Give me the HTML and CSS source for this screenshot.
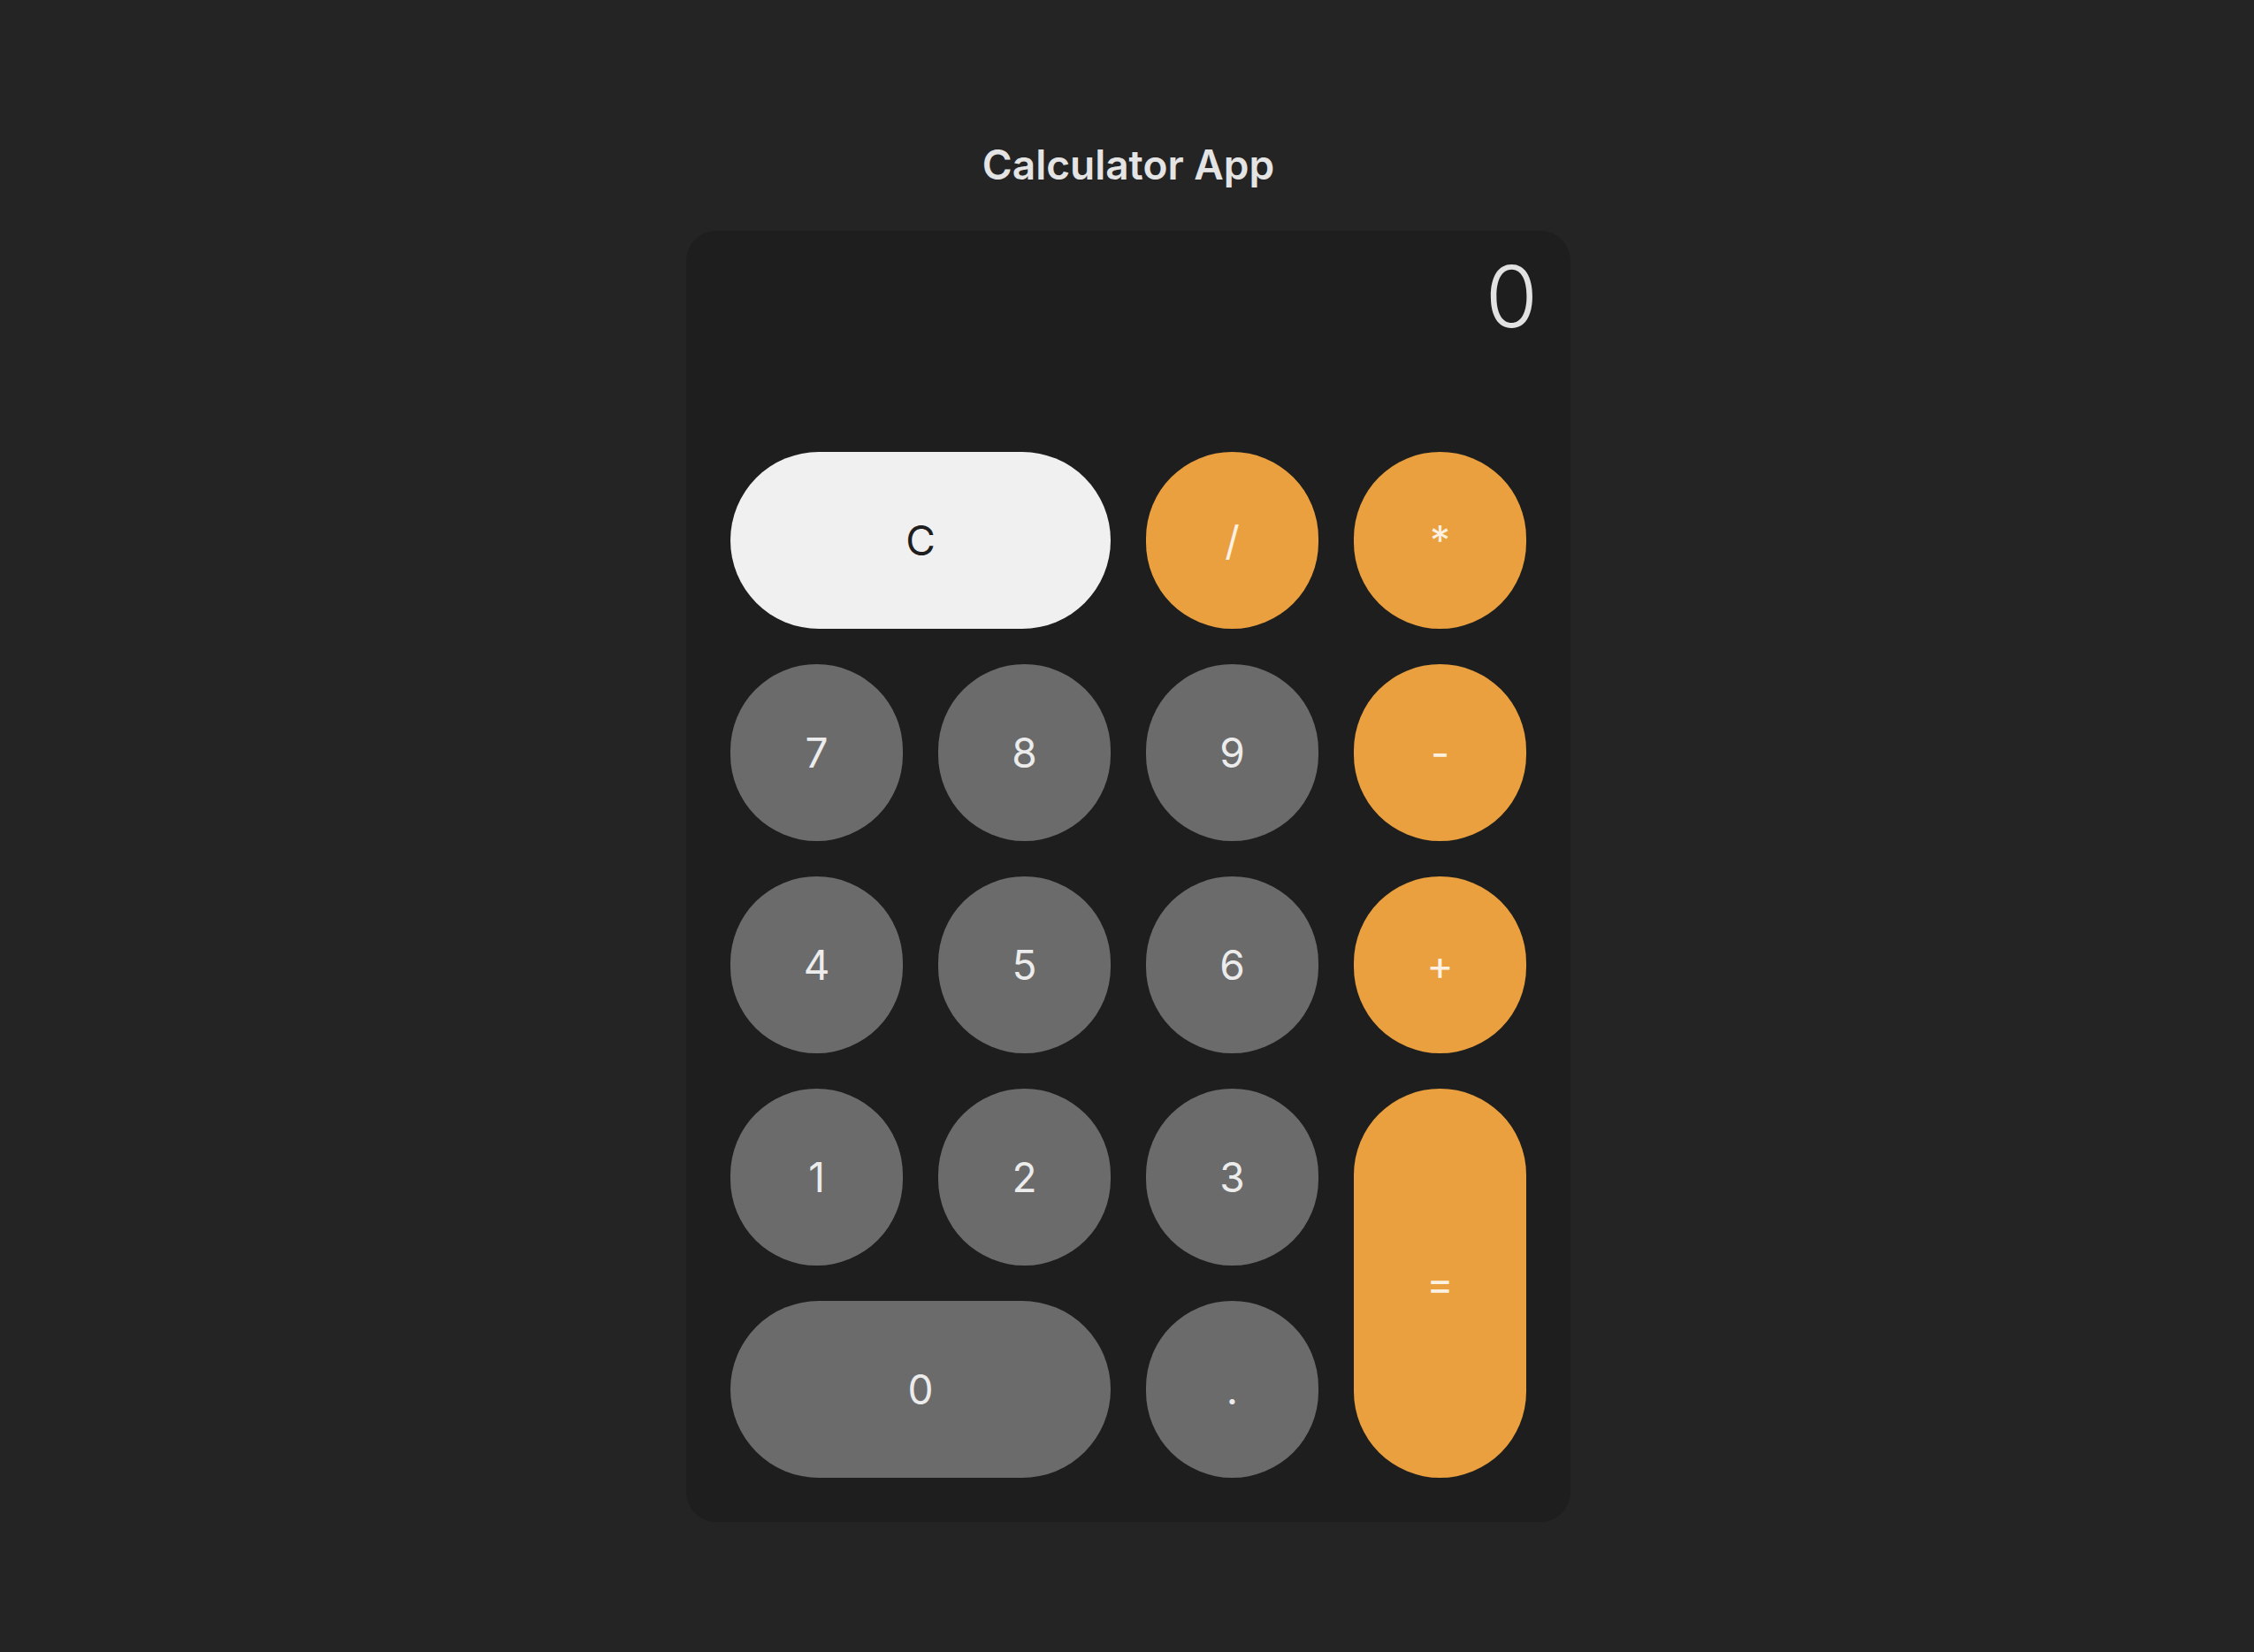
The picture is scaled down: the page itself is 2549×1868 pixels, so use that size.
FILE: index.html
```html
<!DOCTYPE html>
<html lang="en">
<head>
<meta charset="utf-8">
<title>Calculator App</title>
<link rel="stylesheet" href="styles.css">
</head>
<body>
<main class="app">
  <h1 class="title">Calculator App</h1>
  <section class="calc">
    <div class="display">0</div>
    <div class="keypad">
      <button class="key key-clear key-wide">C</button>
      <button class="key key-op">/</button>
      <button class="key key-op">*</button>
      <button class="key key-num">7</button>
      <button class="key key-num">8</button>
      <button class="key key-num">9</button>
      <button class="key key-op">-</button>
      <button class="key key-num">4</button>
      <button class="key key-num">5</button>
      <button class="key key-num">6</button>
      <button class="key key-op">+</button>
      <button class="key key-num">1</button>
      <button class="key key-num">2</button>
      <button class="key key-num">3</button>
      <button class="key key-op key-tall">=</button>
      <button class="key key-num key-wide">0</button>
      <button class="key key-num">.</button>
    </div>
  </section>
</main>
</body>
</html>
```
FILE: styles.css
```css
html, body {
  margin: 0;
  padding: 0;
  background: #242424;
}

body {
  font-family: Inter, "Noto Sans", "Liberation Sans", sans-serif;
  color: #e6e6e6;
}

.app {
  display: flex;
  flex-direction: column;
  align-items: center;
  padding-top: 158px;
  padding-left: 3px;
}

.title {
  margin: 0 0 47px;
  font-size: 46px;
  font-weight: 600;
  line-height: normal;
  color: #e4e4e4;
}

.calc {
  width: 1000px;
  box-sizing: border-box;
  padding: 16px 37px 50px 36px;
  background: #1e1e1e;
  border-radius: 34px;
}

.display {
  height: 234px;
  text-align: right;
  font-size: 96px;
  font-weight: 300;
  line-height: normal;
  color: #e2e2e2;
}

.keypad {
  display: grid;
  grid-template-columns: repeat(4, 195px);
  grid-auto-rows: 200px;
  gap: 40px;
  padding: 0 13px 0 14px;
}

.key {
  border: none;
  margin: 0;
  padding: 0;
  border-radius: 100px;
  font-family: inherit;
  font-size: 46px;
  font-weight: 400;
  line-height: 1;
  display: flex;
  align-items: center;
  justify-content: center;
}

.key-num {
  background: #6b6b6b;
  color: #ececec;
}

.key-op {
  background: #eaa03f;
  color: #fdf1e2;
}

.key-clear {
  background: #f0f0f0;
  color: #1e1e1e;
}

.key-wide {
  grid-column: span 2;
}

.key-tall {
  grid-row: span 2;
}
```
